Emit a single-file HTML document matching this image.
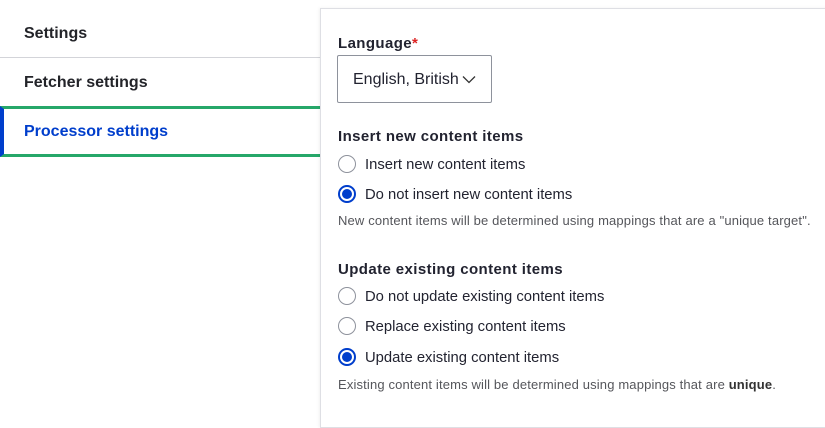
<!DOCTYPE html>
<html><head><style>
*{margin:0;padding:0;box-sizing:border-box}
body{width:825px;height:416px;background:#fff;font-family:"Liberation Sans",Arial,sans-serif;color:#222330;position:relative;overflow:hidden}
.nav{position:absolute;left:24px;font-weight:bold;font-size:16px;color:#232429}
.panel{position:absolute;left:320px;top:8px;width:520px;height:420px;border:1px solid #dedfe4;box-shadow:-1px 0 3px rgba(0,0,0,.06);background:#fff}
.t{position:absolute;white-space:nowrap}
.h{font-weight:bold;font-size:15px;letter-spacing:.4px}
.o{font-size:14.8px;left:365px}
.d{font-size:13px;letter-spacing:.15px;color:#55565b;left:338px}
.r{position:absolute;left:338px;width:18px;height:18px;border-radius:50%;border:1px solid #8e929c;background:#fff}
.r.on{border:2px solid #003ecc}
.r.on::after{content:"";position:absolute;left:2px;top:2px;width:10px;height:10px;border-radius:50%;background:#003ecc}
</style></head><body>
<div class="nav" style="top:25px">Settings</div>
<div style="position:absolute;left:0;top:57px;width:320px;height:1px;background:#d3d4d9"></div>
<div class="nav" style="top:74px">Fetcher settings</div>
<div style="position:absolute;left:0;top:106px;width:322px;height:51px;border-top:3px solid #26a769;border-bottom:3px solid #26a769;border-left:4px solid #003ecc"></div>
<div class="nav" style="top:123px;color:#003ecc">Processor settings</div>
<div class="panel"></div>
<div class="t h" style="left:338px;top:35px">Language<span style="color:#dc2323">*</span></div>
<div style="position:absolute;left:337px;top:55px;width:155px;height:48px;border:1px solid #8e929c;border-radius:2px"></div>
<div class="t" style="left:353px;top:71px;font-size:16px">English, British</div>
<svg style="position:absolute;left:462px;top:75px" width="14" height="9" viewBox="0 0 14 9"><path d="M1 1.5l6 6 6-6" fill="none" stroke="#333" stroke-width="1.3"/></svg>
<div class="t h" style="left:338px;top:128px">Insert new content items</div>
<div class="r" style="top:155px"></div><div class="t o" style="top:157px">Insert new content items</div>
<div class="r on" style="top:185px"></div><div class="t o" style="top:187px">Do not insert new content items</div>
<div class="t d" style="top:213px">New content items will be determined using mappings that are a "unique target".</div>
<div class="t h" style="left:338px;top:261px">Update existing content items</div>
<div class="r" style="top:287px"></div><div class="t o" style="top:289px">Do not update existing content items</div>
<div class="r" style="top:317px"></div><div class="t o" style="top:319px">Replace existing content items</div>
<div class="r on" style="top:348px"></div><div class="t o" style="top:350px">Update existing content items</div>
<div class="t d" style="top:377px">Existing content items will be determined using mappings that are <b style="color:#333">unique</b>.</div>
</body></html>
